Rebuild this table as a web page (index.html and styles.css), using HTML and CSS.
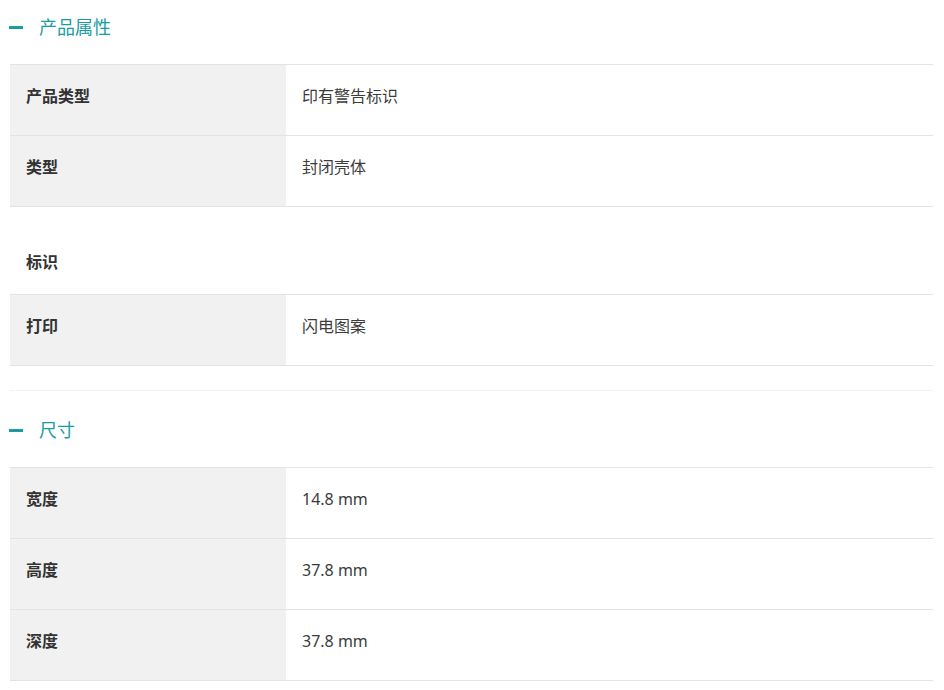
FILE: index.html
```html
<!DOCTYPE html>
<html lang="zh">
<head>
<meta charset="utf-8">
<title>产品属性</title>
<link rel="stylesheet" href="styles.css">
</head>
<body>
<div class="page">
  <section class="group">
    <div class="group-head"><span class="dash"></span><h2>产品属性</h2></div>
    <table class="attrs">
      <tr><th>产品类型</th><td>印有警告标识</td></tr>
      <tr><th>类型</th><td>封闭壳体</td></tr>
      <tr class="sub"><th colspan="2">标识</th></tr>
      <tr><th>打印</th><td>闪电图案</td></tr>
    </table>
  </section>
  <section class="group next">
    <div class="group-head"><span class="dash"></span><h2>尺寸</h2></div>
    <table class="attrs">
      <tr><th>宽度</th><td>14.8 mm</td></tr>
      <tr><th>高度</th><td>37.8 mm</td></tr>
      <tr><th>深度</th><td>37.8 mm</td></tr>
    </table>
  </section>
</div>
</body>
</html>
```

FILE: styles.css
```css
html, body {
  margin: 0;
  padding: 0;
  background: #fff;
}
body {
  font-family: "Noto Sans", "Noto Sans CJK SC", sans-serif;
  color: #333;
}
.page {
  padding: 0 11px 0 10px;
}
.group {
  padding-bottom: 24px;
}
.group.next {
  border-top: 1px solid #f3f3f3;
  padding-top: 12px;
}
.group-head {
  display: flex;
  align-items: center;
  height: 54px;
  margin-bottom: 10px;
}
.dash {
  display: block;
  width: 14px;
  height: 3px;
  background: #1a9ca2;
  margin-left: -1px;
  margin-right: 16px;
}
.group-head h2 {
  margin: 0;
  font-size: 18px;
  font-weight: 400;
  color: #1a9ca2;
  line-height: 24px;
}
.attrs {
  width: 100%;
  border-collapse: collapse;
  border-top: 1px solid #e3e3e3;
}
.attrs th,
.attrs td {
  border-bottom: 1px solid #e3e3e3;
  height: 70px;
  box-sizing: border-box;
  padding: 19px 16px 27px;
  vertical-align: top;
  font-size: 16px;
  line-height: 24px;
  text-align: left;
}
.attrs th {
  width: 276px;
  background: #f1f1f1;
  font-weight: 700;
  color: #333;
}
.attrs td {
  font-weight: 400;
  color: #3c3c3c;
}
.attrs tr.sub th {
  background: #fff;
  height: 87px;
  padding-top: 43px;
  padding-bottom: 20px;
}
```
